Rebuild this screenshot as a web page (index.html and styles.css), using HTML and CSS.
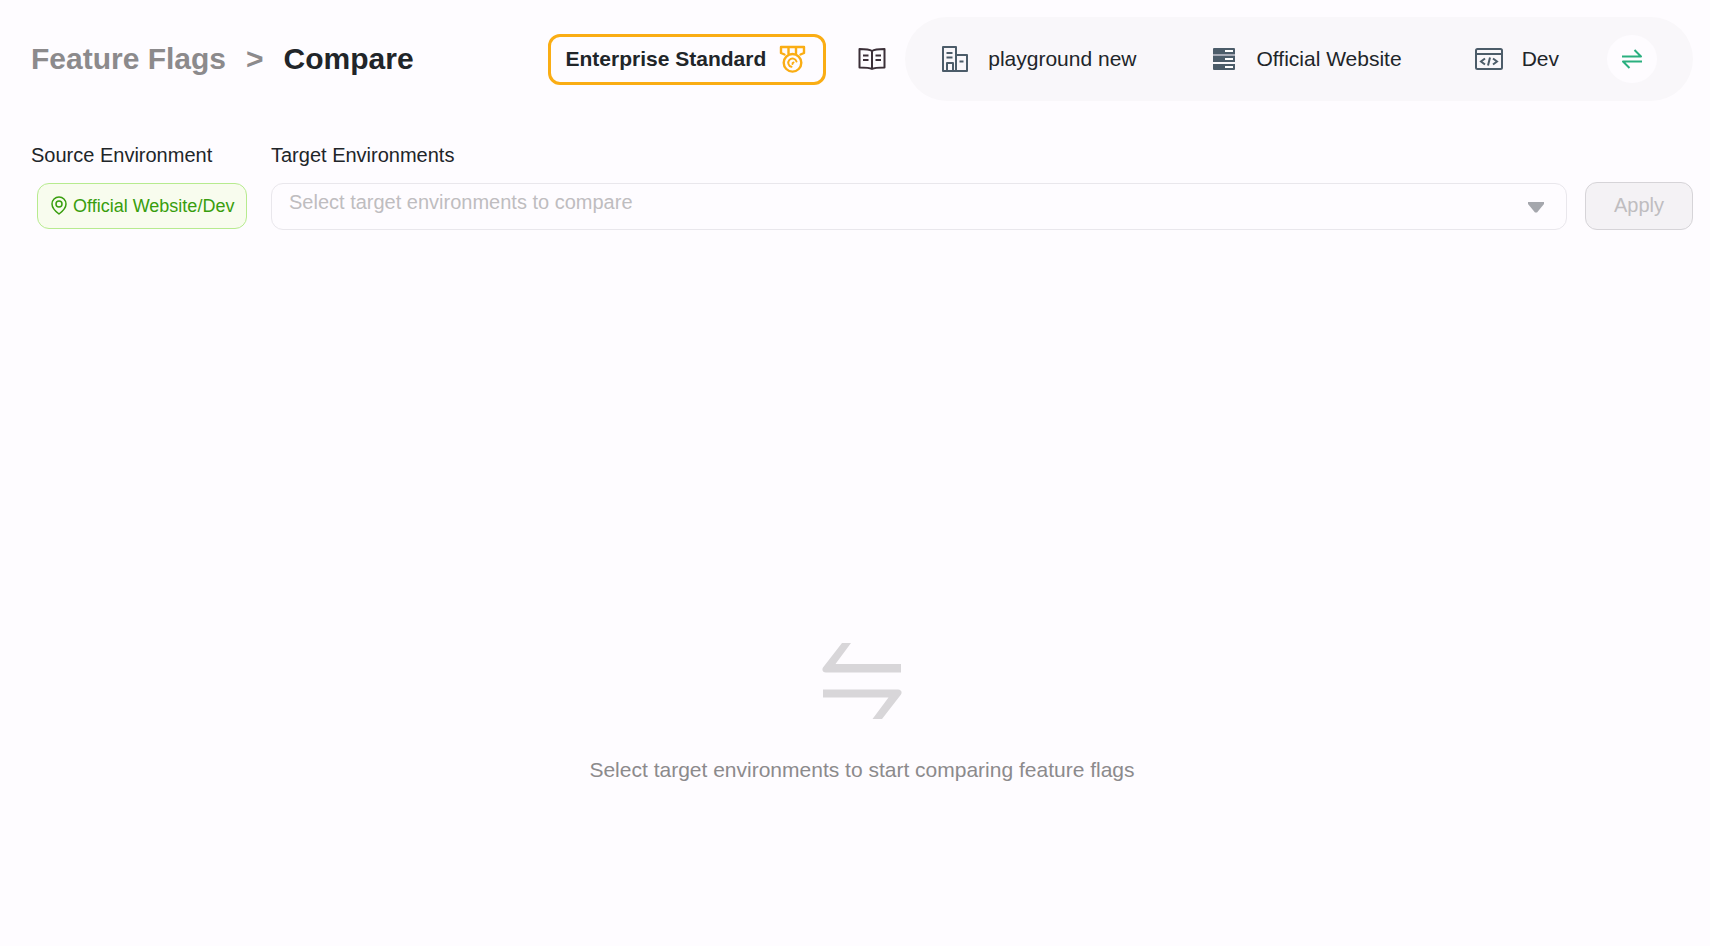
FILE: index.html
```html
<!DOCTYPE html>
<html lang="en">
<head>
  <meta charset="UTF-8" />
  <meta name="viewport" content="width=device-width, initial-scale=1.0" />
  <title>Feature Flags - Compare</title>
  <link rel="stylesheet" href="styles.css">
</head>
<body>
  <header class="header">
    <nav class="breadcrumb" aria-label="Breadcrumb">
      <a href="#">Feature Flags</a>
      <span class="separator">&gt;</span>
      <h1>Compare</h1>
    </nav>

    <div class="header-right">
      <a class="license" href="#">
        Enterprise Standard
        <svg width="28" height="30" viewBox="0 0 28 30" fill="none" stroke="#faad14" stroke-width="2.4" stroke-linecap="round" stroke-linejoin="round">
          <path d="M6.500 10.500L3 9V3h23v6l-3.500 1.500M10.500 3v6.500M18 3v6.500" />
          <circle cx="14.500" cy="18.800" r="8.800" />
          <path d="M18.500 17.500a4.200 4.200 0 1 0-5 5.300M14.500 20a1.300 1.300 0 0 1 1-1.500" stroke-width="2" />
        </svg>
      </a>

      <a class="docs" href="#" aria-label="Documentation">
        <svg width="28" height="24" viewBox="0 0 28 24" fill="none" stroke="#3b2f38" stroke-width="2">
          <path d="M14 4C11.500 2.300 8 2 1.500 2v18.500c6 0 10 0 12.500 1.500 2.500-1.500 6.500-1.500 12.500-1.500V2C20 2 16.500 2.300 14 4zM14 4v18" stroke-linejoin="round" />
          <path d="M5 8.500h5.500M5 13h5.500M17.500 8.500h5.500M17.500 13h5.500" />
        </svg>
      </a>

      <div class="context">
        <button type="button" class="context-item">
          <svg width="28" height="28" viewBox="0 0 28 28" fill="none" stroke="#4c5c69" stroke-width="2" stroke-linejoin="round">
            <path d="M2 2h13v24H2zM15 10h11v16H15M6 26v-8h6v8M5.500 8h6M5.500 12.500h6M18.500 16.500h4" />
          </svg>
          playground new
        </button>
        <button type="button" class="context-item">
          <svg width="28" height="28" viewBox="0 0 28 28">
            <path d="M4 3h20a1 1 0 0 1 1 1v5H3V4a1 1 0 0 1 1-1zM3 11h22v6H3zM3 19h22v5a1 1 0 0 1-1 1H4a1 1 0 0 1-1-1z" fill="#4c5c69" />
            <path d="M3 9h22v2H3z" fill="#a9acb7" />
            <path d="M15 5h8v2h-8zM15 13h8v2h-8zM15 21h8v2h-8z" fill="#fff" />
          </svg>
          Official Website
        </button>
        <button type="button" class="context-item">
          <svg width="28" height="28" viewBox="0 0 28 28" fill="none" stroke="#4c5c69" stroke-width="2">
            <rect x="1" y="4" width="26" height="20" rx="1.500" />
            <path d="M1 9h26M10 13.500l-4 3 4 3M18 13.500l4 3-4 3M15 12.500l-2 8" />
          </svg>
          Dev
        </button>
        <button type="button" class="switch" aria-label="Switch environment">
          <svg width="22" height="22" viewBox="0 0 22 22" fill="none" stroke="#2aaf7f" stroke-width="2" stroke-linejoin="round">
            <path d="M1 8.500h19l-6.500-6.500M21 13.500H2l6.500 6.500" />
          </svg>
        </button>
      </div>
    </div>
  </header>

  <main>
    <form class="filters">
      <div class="field source">
        <span class="field-label">Source Environment</span>
        <span class="tag">
          <svg width="18" height="20" viewBox="0 0 18 20" fill="none" stroke="#389e0d" stroke-width="1.500">
            <path d="M9 18C5 15 2 11.500 2 8a7 7 0 0 1 14 0c0 3.500-3 7-7 10z" stroke-linejoin="round" />
            <circle cx="9" cy="8" r="3" />
          </svg>
          Official Website/Dev
        </span>
      </div>

      <div class="field target">
        <label class="field-label" for="targets">Target Environments</label>
        <div class="select-box">
          <select id="targets" name="targets">
            <option value="" selected disabled>Select target environments to compare</option>
          </select>
          <svg class="caret" width="16" height="11" viewBox="0 0 16 11" fill="#a5a7ad">
            <path d="M0 0h16v2L9 10.500H7L0 2z" />
          </svg>
        </div>
      </div>

      <button type="submit" class="apply" disabled>Apply</button>
    </form>

    <section class="empty">
      <svg width="80" height="76" viewBox="0 0 80 76" fill="#d8d6d9">
        <path d="M20 0h9L13.500 21H79v8.500H4C1 29.500-.500 27 1 24.500z" />
        <path d="M60 76h-9.500L66.500 54.500H1v-8h75c3 0 4.500 2.500 3 5z" />
      </svg>
      <p>Select target environments to start comparing feature flags</p>
    </section>
  </main>
</body>
</html>
```

FILE: styles.css
```css
* {
  box-sizing: border-box;
}
body {
  margin: 0;
  padding: 17px 17px 0 31px;
  font-family: "Liberation Sans", Arial, sans-serif;
  font-size: 20px;
  line-height: 30px;
  background-color: #fefcff;
  color: #212529;
}
a {
  color: inherit;
  text-decoration: none;
}
button, select {
  font: inherit;
  color: inherit;
}
svg {
  display: block;
  flex: none;
}
.header {
  display: flex;
  align-items: center;
  justify-content: space-between;
}
.breadcrumb {
  display: flex;
  align-items: center;
  gap: 20px;
  font-size: 30px;
  font-weight: bold;
  color: #8c8a8c;
}
.breadcrumb h1 {
  margin: 0;
  font-size: 30px;
  color: #212529;
}
.header-right {
  display: flex;
  align-items: center;
  font-size: 21px;
}
.license {
  display: flex;
  align-items: center;
  gap: 12px;
  height: 51px;
  padding: 0 17px 0 15px;
  border: 3px solid #faad14;
  border-radius: 12px;
  font-weight: bold;
}
.docs {
  margin: 0 19px 0 32px;
}
.context {
  display: flex;
  align-items: center;
  gap: 73px;
  height: 84px;
  padding: 0 36px;
  border-radius: 42px;
  background-color: #f9f7fa;
}
.context-item {
  display: flex;
  align-items: center;
  gap: 19px;
  padding: 0;
  border: none;
  background: none;
  cursor: pointer;
}
.switch {
  display: flex;
  align-items: center;
  justify-content: center;
  width: 50px;
  height: 48px;
  margin-left: -25px;
  padding: 0;
  border: none;
  border-radius: 50%;
  background-color: #fefcff;
  cursor: pointer;
}
.filters {
  display: flex;
  align-items: flex-start;
  margin-top: 39px;
}
.field {
  display: flex;
  flex-direction: column;
  gap: 13px;
}
.source {
  width: 240px;
}
.target {
  flex: 1;
}
.tag {
  display: flex;
  align-items: center;
  align-self: flex-start;
  gap: 5px;
  height: 46px;
  margin-left: 6px;
  padding: 0 12px;
  border: 1px solid #b7eb8f;
  border-radius: 12px;
  background-color: #f8fcee;
  font-size: 18px;
  color: #389e0d;
}
.select-box {
  position: relative;
}
.select-box select {
  display: block;
  width: 100%;
  height: 47px;
  padding: 0 48px 10px 17px;
  border: 1px solid #e9e7ec;
  border-radius: 12px;
  background-color: #fefcff;
  color: #bfbdc0;
  appearance: none;
}
.caret {
  position: absolute;
  top: 19px;
  right: 23px;
  pointer-events: none;
}
.apply {
  align-self: flex-end;
  width: 108px;
  height: 48px;
  margin-left: 18px;
  padding: 0 0 2px;
  border: 1px solid #d6d4d8;
  border-radius: 12px;
  background-color: #f4f2f5;
  color: #bfbdc0;
}
.empty {
  display: flex;
  flex-direction: column;
  align-items: center;
  padding-top: 413px;
  font-size: 21px;
  color: #8c8a8c;
}
.empty p {
  margin: 36px 0 0;
}
```
